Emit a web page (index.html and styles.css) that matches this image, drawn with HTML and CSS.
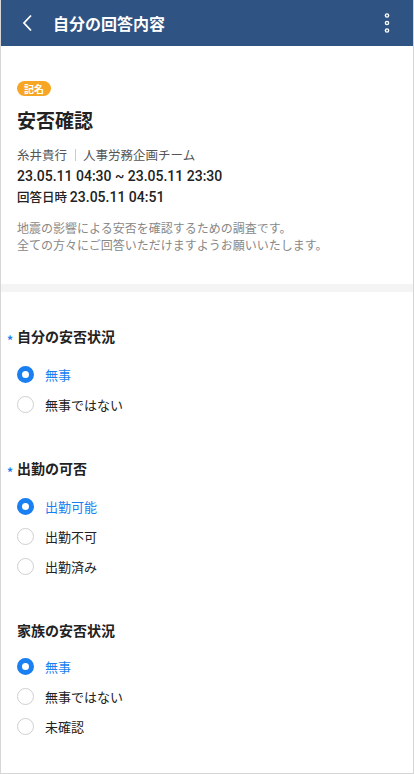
FILE: index.html
```html
<!DOCTYPE html>
<html lang="ja">
<head>
    <meta charset="UTF-8">
    <meta name="viewport" content="width=device-width, initial-scale=1.0">
    <title>自分の回答内容</title>

    <link rel="stylesheet" href="styles.css">
</head>
<body>
    <div id="page">
        <div id="header">
            <div class="back">
                <svg width="12" height="18" viewBox="0 0 12 18"><path d="M9 1.5 L2 9 L9 16.5" fill="none" stroke="#fff" stroke-width="1.8"/></svg>
            </div>
            <h1>自分の回答内容</h1>
            <div class="menu">
                <svg width="8" height="22" viewBox="0 0 8 22"><circle cx="4" cy="3.5" r="2.3" fill="#fff"/><circle cx="4" cy="11" r="2.3" fill="#fff"/><circle cx="4" cy="18.5" r="2.3" fill="#fff"/><circle cx="4" cy="3.5" r="0.9" fill="#2f5383"/><circle cx="4" cy="11" r="0.9" fill="#2f5383"/><circle cx="4" cy="18.5" r="0.9" fill="#2f5383"/></svg>
            </div>
        </div>

        <div id="info">
            <div class="badge">記名</div>
            <h2>安否確認</h2>
            <div class="author">糸井貴行<span class="sep"></span>人事労務企画チーム</div>
            <div class="date"><span class="num">23.05.11 04:30 ~ 23.05.11 23:30</span></div>
            <div class="date">回答日時 <span class="num">23.05.11 04:51</span></div>
            <p class="desc">地震の影響による安否を確認するための調査です。<br>全ての方々にご回答いただけますようお願いいたします。</p>
        </div>

        <div class="band"></div>

        <div id="answers">
            <div class="question">
                <h3><span class="req">*</span>自分の安否状況</h3>
                <div class="option checked"><span class="radio"></span>無事</div>
                <div class="option"><span class="radio"></span>無事ではない</div>
            </div>

            <div class="question">
                <h3><span class="req">*</span>出勤の可否</h3>
                <div class="option checked"><span class="radio"></span>出勤可能</div>
                <div class="option"><span class="radio"></span>出勤不可</div>
                <div class="option"><span class="radio"></span>出勤済み</div>
            </div>

            <div class="question last">
                <h3>家族の安否状況</h3>
                <div class="option checked"><span class="radio"></span>無事</div>
                <div class="option"><span class="radio"></span>無事ではない</div>
                <div class="option"><span class="radio"></span>未確認</div>
            </div>
        </div>
    </div>
</body>
</html>
```

FILE: styles.css
```css
*{
    margin: 0;
    padding: 0;
    box-sizing: border-box;
    font-family: "Noto Sans CJK JP", "Noto Sans", sans-serif;
}

body{
    width: 414px;
    height: 774px;
    background: #fff;
    overflow: hidden;
}

#page{
    width: 414px;
    height: 774px;
    border: 1px solid #d6d6d6;
    border-top: none;
    overflow: hidden;
}

#header{
    height: 46px;
    background: #2f5383;
    display: flex;
    align-items: center;
    padding-left: 21px;
    padding-right: 22px;
    color: #fff;
}
#header .back{
    width: 12px;
    height: 18px;
    display: flex;
}
#header h1{
    flex: 1;
    margin-left: 19px;
    font-size: 16px;
    font-weight: bold;
    line-height: 20px;
}
#header .menu{
    display: flex;
}

#info{
    padding: 35px 16px 0 16px;
    height: 238px;
}
#info .badge{
    width: fit-content;
    background: #f6a623;
    color: #fff;
    font-size: 10px;
    font-weight: bold;
    line-height: 15px;
    height: 15px;
    padding: 0 7px;
    border-radius: 8px;
}
#info h2{
    margin-top: 10px;
    font-size: 19px;
    font-weight: bold;
    line-height: 28px;
    color: #222;
}
#info .author{
    margin-top: 11px;
    font-size: 12.5px;
    line-height: 20px;
    color: #555;
    display: flex;
    align-items: center;
}
#info .sep{
    display: inline-block;
    width: 1px;
    height: 12px;
    background: #ccc;
    margin: 0 7px 0 8px;
}
#info .date{
    font-size: 12.5px;
    font-weight: 500;
    line-height: 21px;
    height: 21px;
    color: #222;
}
#info .date .num{
    font-family: Roboto, "Noto Sans CJK JP", sans-serif;
    font-size: 14px;
    font-weight: 500;
}
#info .desc{
    margin-top: 12px;
    font-size: 12px;
    line-height: 17px;
    color: #888;
}

.band{
    height: 8px;
    background: #f4f4f4;
}

#answers{
    padding-top: 33px;
}
.question{
    padding-bottom: 38px;
}
.question h3{
    position: relative;
    font-size: 14px;
    font-weight: bold;
    line-height: 22px;
    color: #222;
    padding-left: 16px;
    margin-bottom: 12px;
}
.question.last h3{
    margin-bottom: 10px;
}
.question h3 .req{
    position: absolute;
    left: 6px;
    top: 4px;
    color: #1a7ff0;
    font-size: 12px;
}
.option{
    display: flex;
    align-items: center;
    height: 30px;
    padding-left: 16px;
    font-size: 13px;
    color: #222;
}
.option .radio{
    width: 17px;
    height: 17px;
    border: 1px solid #cfcfcf;
    border-radius: 50%;
    margin-right: 11px;
    background: #fff;
}
.option.checked{
    color: #1a7ff0;
}
.option.checked .radio{
    border: 5.5px solid #1a7ff0;
}
```
